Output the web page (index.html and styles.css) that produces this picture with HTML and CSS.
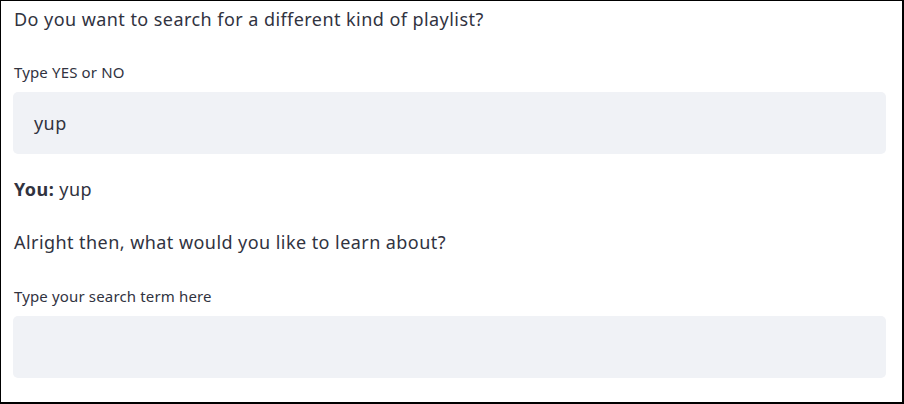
FILE: index.html
```html
<!DOCTYPE html>
<html>
<head>
<meta charset="utf-8">
<link rel="stylesheet" href="styles.css">
</head>
<body>
<div class="app">
  <p class="msg msg-first">Do you want to search for a different kind of playlist?</p>
  <label class="field-label">Type YES or NO</label>
  <div class="field">yup</div>
  <p class="msg msg-you"><strong>You:</strong> yup</p>
  <p class="msg msg-next">Alright then, what would you like to learn about?</p>
  <label class="field-label field-label-second">Type your search term here</label>
  <div class="field"></div>
</div>
</body>
</html>
```

FILE: styles.css
```css
html, body {
  margin: 0;
  padding: 0;
  background: #ffffff;
}
.app {
  box-sizing: border-box;
  width: 904px;
  height: 404px;
  border-style: solid;
  border-color: #000000;
  border-width: 1px 2px 2px 1px;
  padding: 4px 16px 0 12px;
  display: flex;
  flex-direction: column;
  color: #31333f;
  font-family: "Noto Sans", sans-serif;
}
.msg {
  margin: 0;
  padding-left: 1px;
  font-size: 18px;
  line-height: 28px;
  letter-spacing: 0.44px;
}
.msg strong {
  font-weight: 700;
}
.field-label {
  display: block;
  margin-top: 29px;
  padding-left: 1px;
  font-family: "Noto Sans", sans-serif;
  font-size: 15px;
  line-height: 20px;
  letter-spacing: 0.15px;
}
.field {
  box-sizing: border-box;
  margin-top: 10px;
  height: 62px;
  background: #f0f2f6;
  border-radius: 5px;
  padding: 0 21px;
  display: flex;
  align-items: center;
  font-size: 18px;
  letter-spacing: 0.44px;
}
.msg-you {
  margin-top: 21px;
}
.msg-next {
  margin-top: 25px;
}
.field-label-second {
  margin-top: 30px;
}
```
